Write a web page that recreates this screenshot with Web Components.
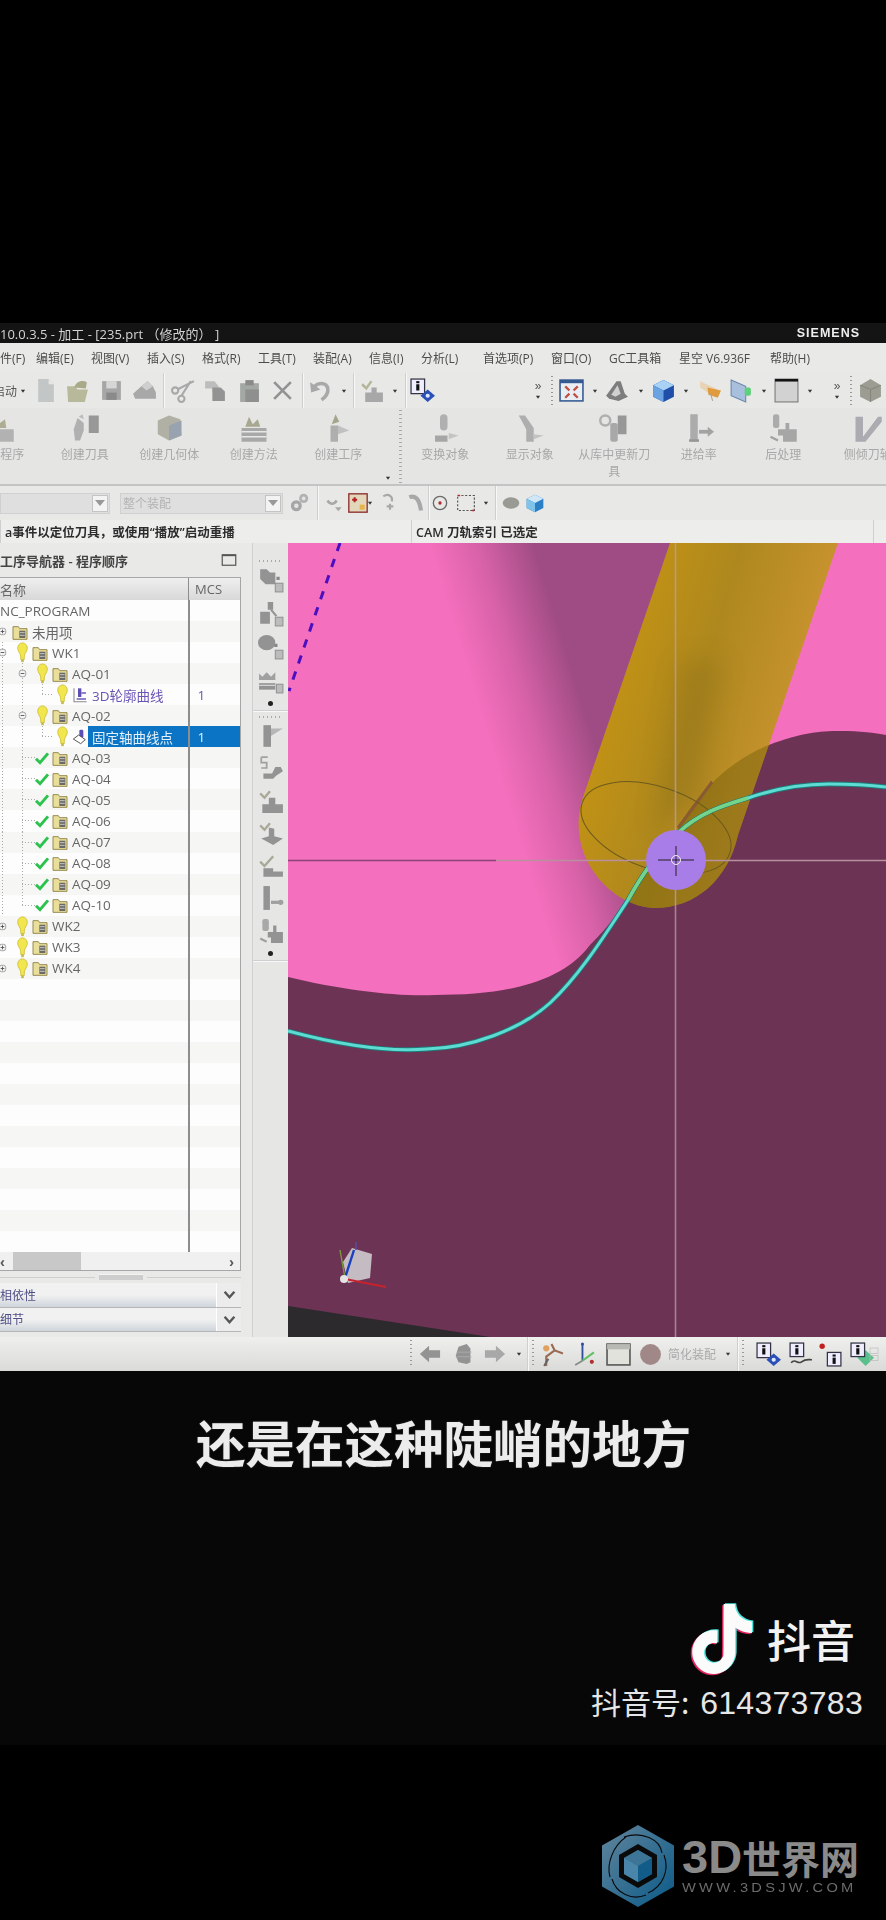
<!DOCTYPE html>
<html lang="zh">
<head>
<meta charset="utf-8">
<title>NX</title>
<style>
  html, body { margin: 0; background: #000; }
  body { width: 886px; height: 1920px; overflow: hidden; font-family: "Noto Sans CJK SC", sans-serif; }
</style>
</head>
<body>
<video-frame></video-frame>

<script>
const UI_FONT = '"Open Sans", "Noto Sans CJK SC", sans-serif';
const G = "#a8a8a8";
const D = "#939393";

const ICONS = {
  file: `<path d="M5 1h10l5 5v17H5z" fill="#c3c6c6"/><path d="M15 1v5h5z" fill="#e6e6e6"/>`,
  open: `<path d="M2 8h8l2 3h10l-3 12H3z" fill="#b7b99a"/><path d="M9 9c1-5 7-8 12-5l-1 6z" fill="#a8aa8a"/>`,
  save: `<path d="M3 3h18v18H3z" fill="#a6a6a6"/><rect x="7" y="3" width="10" height="7" fill="#d6d6d6"/><rect x="7" y="14" width="10" height="7" fill="#8a8a8a"/>`,
  print: `<path d="M1 15l8-7 6-5 5 5 3 6v6H3z" fill="${G}"/><path d="M9 8l6-5 5 5-6 4z" fill="#cfcfcf"/>`,
  cut: `<g fill="none" stroke="${G}" stroke-width="2"><circle cx="4" cy="12" r="3"/><circle cx="10" cy="20" r="3"/><path d="M6 11L22 3M10 17L19 3" /></g>`,
  copy: `<path d="M2 3h9l4 5v5h-6v-3H2z" fill="#bdbdbd"/><path d="M9 9h8l4 4v9H9z" fill="${D}"/>`,
  paste: `<path d="M3 5h18v18H3z" fill="#a4a8a4"/><rect x="8" y="2" width="8" height="5" fill="#8a8a8a"/><rect x="8" y="11" width="13" height="12" fill="#8f8f8f"/>`,
  cross: `<path d="M4 4l16 16M20 4L4 20" stroke="${D}" stroke-width="2.6" fill="none"/>`,
  undo: `<path d="M6 8c6-5 14-3 13 5-1 4-3 6-6 8" fill="none" stroke="${G}" stroke-width="3.4"/><path d="M2 4l1 10 9-3z" fill="${G}"/>`,
  gearcheck: `<path d="M2 6l4 4 5-7" fill="none" stroke="#b5b59c" stroke-width="2.4"/><path d="M11 9h5v5h6v9H5v-9h6z" fill="${G}"/>`,
  info: `<rect x="1" y="1" width="13" height="14" fill="#eef" stroke="#334" stroke-width="1.2"/><rect x="6" y="6" width="3" height="6" fill="#111"/><rect x="6" y="3" width="3" height="2" fill="#111"/><path d="M17 11l7 6-7 6-7-6z" fill="#2a50b8"/><circle cx="17" cy="17" r="2" fill="#dfe8ff"/>`,
  view: `<rect x="1" y="2" width="22" height="20" fill="#e9eef5" stroke="#355a92" stroke-width="1.5"/><rect x="1" y="2" width="22" height="3" fill="#355a92"/><path d="M6 8l4 4M18 8l-4 4M6 19l4-4M18 19l-4-4" stroke="#c05040" stroke-width="2.2"/>`,
  render: `<path d="M2 17L12 3h4l4 12 3 3-9 4-9-2z" fill="#7d7d7d"/><path d="M7 16l6-9 3 8-5 3z" fill="#d0d0d0"/>`,
  cube: `<path d="M12 2l10 5v11l-10 5-10-5V7z" fill="#1f4fa8"/><path d="M2 7l10-5 10 5-10 5z" fill="#a9d2f5"/><path d="M2 7l10 5v11L2 18z" fill="#6aa3e2"/>`,
  orange: `<path d="M3 3l17 8-5 6-12-8z" fill="#e8d3b4"/><path d="M10 9l13 3-3 7-9-3z" fill="#e09b3e"/><path d="M13 15l2 7" stroke="#b0a090"/>`,
  glass: `<path d="M3 2l14 6v15L3 17z" fill="#a8c0de" stroke="#6a84a8"/><rect x="16" y="9" width="6" height="8" rx="2" fill="#5fd07a"/>`,
  black: `<rect x="1" y="1" width="22" height="22" fill="#d2d2d2" stroke="#777"/><rect x="1" y="1" width="22" height="2.4" fill="#111"/>`,
  hexcube: `<path d="M12 1l10 6v11l-10 5-10-5V7z" fill="#9c9c92"/><path d="M12 11V23M2 7l10 4 10-4" stroke="#86867c" fill="none"/>`,
  rTool: `<path d="M6 4l5 4v6l-3 8H4l-1-9z" fill="#b0b0b0"/><rect x="15" y="2" width="8" height="14" fill="#989898"/><path d="M7 3l3-2 1 4z" fill="#bcbcbc"/>`,
  rGeom: `<path d="M3 6l9-4 9 3 1 13-10 4-9-5z" fill="#b0b0a4"/><path d="M12 10l10-4v12l-10 4z" fill="#99a3af"/>`,
  rMethod: `<path d="M2 12h20v11H2z" fill="#a8a8a8"/><path d="M2 15h20M2 19h20" stroke="#e8e8e8" stroke-width="1.3"/><path d="M5 11l3-8 3 6 4-4 2 6z" fill="#a8a892"/>`,
  rOp: `<path d="M6 10h6v13H6z" fill="#aeaeae"/><path d="M12 10l9 4-9 3z" fill="#c0c0c0"/><path d="M7 9l3-8 3 6z" fill="#a5a58f"/>`,
  rProg: `<path d="M1 13h22v10H1z" fill="#b2b2b2"/><path d="M6 12l3-8 3 4 4-3 1 7z" fill="#adad93"/>`,
  rTrans: `<rect x="8" y="1" width="6" height="13" rx="3" fill="#b0b0b0"/><path d="M4 18h10v5H4z" fill="#a6a6a6"/><path d="M15 16l8 2-8 3z" fill="#c4c4c4"/>`,
  rShow: `<path d="M3 2l5 0 7 10v11H9V13z" fill="#aeaeae"/><path d="M15 17l8 1-8 3z" fill="#c2c2c2"/>`,
  rLib: `<circle cx="5" cy="6" r="4" fill="none" stroke="#b0b0b0" stroke-width="2"/><rect x="9" y="8" width="6" height="15" rx="2" fill="#a8a8a8"/><path d="M15 2h7v15h-7z" fill="#989898"/>`,
  rFeed: `<rect x="5" y="1" width="6" height="22" fill="#ababab"/><path d="M4 21h8v2H4z" fill="#989898"/><path d="M12 15h8" stroke="#a3a3a3" stroke-width="3"/><path d="M19 11l5 4-5 4z" fill="#a3a3a3"/>`,
  rPost: `<rect x="4" y="1" width="5" height="11" rx="2" fill="#ababab"/><path d="M8 13h6v-5h3v5h6v10H12v-5H8z" fill="#a6a6a6"/><path d="M2 19l6 3" stroke="#a2a2a2" stroke-width="2"/>`,
  rTilt: `<path d="M2 3h6v16l12-16h3v4L10 23H2z" fill="#ababb1"/>`,
  gears: `<circle cx="8" cy="15" r="6" fill="#a6a6a6"/><circle cx="16" cy="7" r="5" fill="#b2b2b2"/><circle cx="8" cy="15" r="2.4" fill="#e4e4e4"/><circle cx="16" cy="7" r="2" fill="#e4e4e4"/>`,
  link: `<path d="M3 9c3 5 8 5 11 0" fill="none" stroke="${G}" stroke-width="3"/><path d="M12 17l8 0-4 5z" fill="${G}"/>`,
  redbox: `<rect x="1" y="1" width="22" height="22" fill="#e3d7bb" stroke="#8c2c2c" stroke-width="1.6"/><path d="M5 8h6M8 5v6" stroke="#b02020" stroke-width="2.4"/><rect x="14" y="14" width="6" height="6" fill="#e4b44a"/>`,
  twist: `<path d="M4 4c6-4 12 0 10 6M12 20v-7M8 16h8" fill="none" stroke="${G}" stroke-width="2.6"/>`,
  snake: `<path d="M4 5c8-3 12 3 14 16" fill="none" stroke="${G}" stroke-width="5"/>`,
  target: `<circle cx="12" cy="12" r="8" fill="none" stroke="#6a6a6a" stroke-width="1.6"/><circle cx="12" cy="12" r="2" fill="#b02a2a"/>`,
  dotted: `<rect x="2" y="3" width="20" height="18" fill="none" stroke="#555" stroke-width="1.4" stroke-dasharray="2.5 2"/><path d="M2 3h3M22 21h-3" stroke="#b03030" stroke-width="2"/>`,
  blob: `<ellipse cx="12" cy="12" rx="10" ry="7" fill="#9a9a94"/>`,
  bluecube: `<path d="M12 2l10 5v11l-10 5-10-5V7z" fill="#2b7fc4"/><path d="M2 7l10-5 10 5-10 5z" fill="#cfe7f7"/><path d="M2 7l10 5v11L2 18z" fill="#7fc2ea"/>`,
  left: `<path d="M1 12l10-9v5h12v8H11v5z" fill="${D}"/>`,
  right: `<path d="M23 12L13 3v5H1v8h12v5z" fill="${G}"/>`,
  stack: `<path d="M6 4l9-3 4 5v15l-4 2-9-2-3-7z" fill="${D}"/><path d="M4 10h16M4 15h16" stroke="#aaa"/>`,
  triad: `<path d="M6 23V14l8-6 8 3M14 8l-3-6" fill="none" stroke="#9a6a50" stroke-width="2"/><circle cx="6" cy="6" r="3" fill="#e0a060"/><path d="M4 23l4-7" stroke="#666" stroke-width="2"/>`,
  triad2: `<path d="M11 2v16" stroke="#3050a0" stroke-width="1.8"/><path d="M11 18l11-8" stroke="#60c060" stroke-width="2"/><path d="M11 18l-7 4" stroke="#888" stroke-width="1.6"/><circle cx="20" cy="19" r="2" fill="#b03030"/><circle cx="11" cy="2" r="1.5" fill="#3050a0"/>`,
  win: `<rect x="1" y="2" width="22" height="20" fill="#e2e2dc" stroke="#5c5c5c" stroke-width="1.6"/><rect x="1" y="2" width="22" height="5" fill="#b8b8b4"/>`,
  disc: `<circle cx="12" cy="12" r="10" fill="#a08888"/>`,
  iwave: `<rect x="2" y="1" width="13" height="13" fill="#eef" stroke="#334" stroke-width="1.2"/><rect x="7" y="6" width="3" height="6" fill="#111"/><rect x="7" y="3" width="3" height="2" fill="#111"/><path d="M3 20c4-5 6 2 10-1s6-2 10-2" fill="none" stroke="#444" stroke-width="1.6"/>`,
  idot: `<circle cx="4" cy="4" r="2.6" fill="#c02020"/><rect x="9" y="10" width="13" height="13" fill="#eef" stroke="#334" stroke-width="1.2"/><rect x="14" y="15" width="3" height="6" fill="#111"/><rect x="14" y="12" width="3" height="2" fill="#111"/>`,
  igreen: `<path d="M15 8l8 7-8 8-8-8z" fill="#58c08a"/><rect x="1" y="1" width="13" height="13" fill="#eef" stroke="#334" stroke-width="1.2"/><rect x="6" y="6" width="3" height="6" fill="#111"/><rect x="6" y="3" width="3" height="2" fill="#111"/>`,
  boxes: `<rect x="3" y="3" width="12" height="8" fill="none" stroke="#bbb"/><rect x="3" y="14" width="12" height="8" fill="none" stroke="#bbb"/>`,
  v1: `<path d="M2 2h6l3 3h5v11H7l-5-5z" fill="${D}"/><rect x="17" y="9" width="3" height="3" fill="#888"/><rect x="16" y="15" width="7" height="8" fill="#bcbcbc" stroke="#949494"/>`,
  v2: `<path d="M9 1h5v7h-5zM2 10h9v11H2z" fill="${D}"/><path d="M12 8l5 6" stroke="#949494" stroke-width="2"/><rect x="16" y="15" width="7" height="8" fill="#bcbcbc" stroke="#949494"/>`,
  v3: `<ellipse cx="8" cy="8" rx="8" ry="7" fill="${D}"/><rect x="15" y="9" width="3" height="3" fill="#888"/><rect x="16" y="15" width="7" height="8" fill="#bcbcbc" stroke="#949494"/>`,
  v4: `<path d="M1 5l3 3 4-4 4 4 4-4v7H1z" fill="#a0a0a0"/><path d="M1 14h15v6H1z" fill="${D}"/><path d="M1 16h15" stroke="#ddd"/><rect x="17" y="15" width="6" height="8" fill="#bcbcbc" stroke="#949494"/>`,
  v5: `<path d="M5 2h7v20H5z" fill="${D}"/><path d="M12 5h11l-11 7z" fill="#b6b6b6"/>`,
  v6: `<path d="M3 2h6M3 2v5h5v5H3" fill="none" stroke="#a0a0a0" stroke-width="1.6"/><path d="M5 17h8l3-6h5l2 4-6 4-3 3H5z" fill="${D}"/>`,
  v7: `<path d="M2 5l4 4 5-6" fill="none" stroke="#a9a99a" stroke-width="2.2"/><path d="M10 9h6v6h7v8H4v-8h6z" fill="${D}"/>`,
  v8: `<path d="M2 5l4 4 5-6" fill="none" stroke="#a9a99a" stroke-width="2.2"/><path d="M10 7l5 1v7l8 2-9 6-11-6 7-2z" fill="${D}"/>`,
  v9: `<path d="M2 8l4 4 8-9" fill="none" stroke="#a9a99a" stroke-width="2.2"/><path d="M5 14h9v3h9v5H5z" fill="${D}"/>`,
  v10: `<rect x="5" y="1" width="6" height="22" fill="${D}"/><path d="M12 16h9" stroke="#a0a0a0" stroke-width="3"/><circle cx="21" cy="16" r="2.4" fill="#a0a0a0"/>`,
  v11: `<rect x="4" y="1" width="6" height="11" rx="2" fill="#a8a8a8"/><path d="M9 13h5V7h3v6h6v10H12v-5H9z" fill="${D}"/><path d="M2 19l6 3" stroke="#a0a0a0" stroke-width="2"/>`,
  bulb: `<path d="M12 1c3 0 5.5 2.6 5.5 6 0 4-3.5 6-3.5 10v3h-4v-3c0-4-3.5-6-3.5-10 0-3.4 2.500-6 5.500-6z" fill="#f2e64e" stroke="#cfc038" stroke-width="1"/><rect x="10.500" y="20" width="3" height="3" fill="#c4b850"/>`,
  check: `<path d="M3 13l6 6L21 5" fill="none" stroke="#2cc24e" stroke-width="4.4"/>`,
  folder: `<path d="M1.500 4h8l2 3h11v16h-21z" fill="#eadf9a" stroke="#8e8344" stroke-width="1.4"/><rect x="11" y="10" width="9" height="11" fill="#6a6a66"/><path d="M12 13h7M12 17h7" stroke="#ddd" stroke-width="1.2"/>`,
  op1: `<path d="M3 2v20h19" fill="none" stroke="#8a8a8a" stroke-width="1.6"/><rect x="9" y="2" width="5" height="13" fill="#5d4fb0"/><path d="M14 9h7M7 18h14" stroke="#6a5ab8" stroke-width="2"/>`,
  op2: `<rect x="11" y="1" width="6" height="12" rx="2" fill="#5b4fb5"/><path d="M2 15l8-6 10 7-7 6z" fill="#fff" stroke="#555" stroke-width="1.5"/>`,
  plus: `<rect x="5" y="5" width="14" height="14" rx="5" fill="#f4f4f4" stroke="#999" stroke-width="2"/><path d="M8 12h8M12 8v8" stroke="#555" stroke-width="2"/>`,
  minus: `<rect x="5" y="5" width="14" height="14" rx="5" fill="#f4f4f4" stroke="#999" stroke-width="2"/><path d="M8 12h8" stroke="#555" stroke-width="2"/>`,
  caret: `<path d="M7 9h10l-5 7z" fill="#333"/>`,
  chevron: `<path d="M3 7l9 10 9-10" fill="none" stroke="#555" stroke-width="4.4"/>`,
  restore: `<rect x="3" y="5" width="18" height="14" fill="none" stroke="#555" stroke-width="1.6"/><path d="M3 6h18" stroke="#555" stroke-width="1.8"/>`,
};

class NxIcon extends HTMLElement {
  connectedCallback() {
    const size = this.getAttribute("size") || 24;
    const name = this.getAttribute("name");
    this.attachShadow({ mode: "open" }).innerHTML = `
      <style>
        :host { display: inline-flex; flex: none; width: ${size}px; height: ${size}px; }
        svg { width: 100%; height: 100%; display: block; }
      </style>
      <svg viewBox="0 0 24 24">${ICONS[name] || ""}</svg>`;
  }
}

// [type, centre x, size] -> flex children, spaced by margins from the previous item
function toolStrip(items, start) {
  let right = start || 0;
  return items.map(([type, x, size]) => {
    let w, html;
    if (type === "sep") {
      w = 1;
      html = `<i class="sep"></i>`;
    } else if (type === "dots") {
      w = 2;
      html = `<i class="dots"></i>`;
    } else if (type === "more") {
      w = 10;
      html = `<i class="more">»<nx-icon name="caret" size="10"></nx-icon></i>`;
    } else {
      w = size || (type === "caret" ? 10 : 25);
      html = `<nx-icon name="${type}" size="${w}"></nx-icon>`;
    }
    const ml = x - w / 2 - right;
    right = x + w / 2;
    return `<span class="slot" style="margin-left:${ml.toFixed(1)}px">${html}</span>`;
  }).join("");
}

const STRIP_CSS = `
  .slot { display: inline-flex; align-items: center; flex: none; height: 100%; }
  .sep { display: block; width: 1px; height: 100%; background: #cfcfcf; box-shadow: 1px 0 #f7f7f7; }
  .dots { display: block; width: 2px; height: 84%; background: repeating-linear-gradient(#999 0 1.5px, transparent 1.5px 4px); }
  .more { display: flex; flex-direction: column; align-items: center; width: 10px; font: normal 12px/12px "Liberation Sans", sans-serif; color: #555; }
`;

class NxTitlebar extends HTMLElement {
  connectedCallback() {
    this.attachShadow({ mode: "open" }).innerHTML = `
      <style>
        :host { display: flex; align-items: center; justify-content: space-between; height: 20px; background: #141414; padding-right: 26px; color: #d4d4d4; font: 13px ${UI_FONT}; overflow: hidden; }
        b { font: bold 12.5px "Liberation Sans", sans-serif; letter-spacing: 1px; color: #eee; }
      </style>
      <span>10.0.3.5 - 加工 - [235.prt （修改的） ]</span><b>SIEMENS</b>`;
  }
}

class NxMenubar extends HTMLElement {
  connectedCallback() {
    const items = [["件(F)", 0], ["编辑(E)", 36], ["视图(V)", 91], ["插入(S)", 147], ["格式(R)", 202], ["工具(T)", 258], ["装配(A)", 313], ["信息(I)", 369], ["分析(L)", 421], ["首选项(P)", 483], ["窗口(O)", 551], ["GC工具箱", 609], ["星空 V6.936F", 679], ["帮助(H)", 770]];
    this.attachShadow({ mode: "open" }).innerHTML = `
      <style>
        :host { display: grid; grid-template-columns: repeat(886, 1px); align-items: center; height: 30px; background: #e9e9e7; color: #4c4c4c; font: 12px ${UI_FONT}; white-space: nowrap; }
      </style>
      ${items.map(([t, x]) => `<span style="grid-row:1;grid-column-start:${x + 1}">${t}</span>`).join("")}`;
  }
}

class NxToolbar extends HTMLElement {
  connectedCallback() {
    const h = this.getAttribute("height") || 35;
    const items = JSON.parse(this.getAttribute("items") || "[]");
    const bg = this.getAttribute("bg") || "#e8e8e6";
    this.attachShadow({ mode: "open" }).innerHTML = `
      <style>
        :host { display: flex; align-items: center; height: ${h}px; background: ${bg}; overflow: hidden; }
        ${STRIP_CSS}
        ::slotted(*) { flex: none; }
      </style>
      <slot></slot>${toolStrip(items, +this.getAttribute("start") || 0)}`;
  }
}

class NxRibbonItem extends HTMLElement {
  connectedCallback() {
    this.attachShadow({ mode: "open" }).innerHTML = `
      <style>
        :host { display: flex; flex: none; flex-direction: column; align-items: center; width: 84.5px; padding-top: 5px; color: #a8a8a8; font: 12px/17px ${UI_FONT}; text-align: center; }
        nx-icon { margin-bottom: 3px; }
        span { width: 76px; }
      </style>
      <nx-icon name="${this.getAttribute("icon")}" size="30"></nx-icon><span><slot></slot></span>`;
  }
}

class NxRibbon extends HTMLElement {
  connectedCallback() {
    this.attachShadow({ mode: "open" }).innerHTML = `
      <style>
        :host { display: flex; height: 78px; background: #e5e5e3; box-shadow: inset 0 -2px #c4c4c4; overflow: hidden; }
        .group { display: flex; flex: none; }
        .first { margin-left: -42px; width: 445px; }
        .caret { align-self: flex-end; margin: 0 0 3px 2px; }
        .rule { width: 3px; margin: 2px 8px 3px 6px; background: repeating-linear-gradient(#aaa 0 1.5px, transparent 1.5px 4px); flex: none; }
      </style>
      <div class="group first"><slot name="a"></slot><nx-icon class="caret" name="caret" size="10"></nx-icon><i class="rule"></i></div>
      <div class="group"><slot name="b"></slot></div>`;
  }
}

class NxDropdown extends HTMLElement {
  connectedCallback() {
    this.attachShadow({ mode: "open" }).innerHTML = `
      <style>
        :host { display: flex; flex: none; align-items: center; height: 21px; box-sizing: border-box; background: #dfdfdf; color: #b4b4b4; font: 12px ${UI_FONT}; padding-left: 3px; box-shadow: inset 0 0 0 1px #d0d0d0; }
        span { flex: 1; }
        i { display: flex; align-items: center; justify-content: center; width: 16px; height: 17px; margin-right: 2px; background: #f3f3f3; border: 1px solid #c4c4c4; box-sizing: border-box; }
        i::after { content: ""; border: 5px solid transparent; border-top: 6px solid #999; border-bottom: 0; }
      </style>
      <span><slot></slot></span><i></i>`;
  }
}

class NxCuebar extends HTMLElement {
  connectedCallback() {
    this.attachShadow({ mode: "open" }).innerHTML = `
      <style>
        :host { display: grid; grid-template-columns: 411px 462px 1fr; align-items: center; height: 23px; background: #ededeb; color: #2c2c2c; font: 600 12.5px ${UI_FONT}; white-space: nowrap; overflow: hidden; }
        span { padding-left: 4px; border-left: 1px solid #cfcfcf; height: 100%; display: flex; align-items: center; }
        span:first-child { padding: 0; border: 0; }
      </style>
      <span>a事件以定位刀具，或使用“播放”启动重播</span><span>CAM 刀轨索引 已选定</span><span></span>`;
  }
}

class NxTreeRow extends HTMLElement {
  connectedCallback() {
    const a = n => this.getAttribute(n);
    const level = +(a("level") || 0);
    const exp = a("exp");
    const mark = a("mark");
    const icon = a("icon");
    const sel = this.hasAttribute("selected");
    const guides = (a("guides") || "").split(",").filter(Boolean);
    const stub = a("stub");
    const bgs = guides.map(g => {
      const [x, to] = g.split(":");
      return `repeating-linear-gradient(#aaa 0 1px, transparent 1px 3px) ${x}px 0 / 1px ${to || 100}% no-repeat`;
    });
    if (stub) {
      const [x, w] = stub.split(":");
      bgs.push(`repeating-linear-gradient(90deg, #aaa 0 1px, transparent 1px 3px) ${x}px 50% / ${w}px 1px no-repeat`);
    }
    this.attachShadow({ mode: "open" }).innerHTML = `
      <style>
        :host { display: grid; grid-template-columns: 188px 52px; height: 21.05px; background: ${a("alt") !== null ? "#f6f6f5" : "#fdfdfd"}; color: ${a("color") || "#666"}; font: 13.5px ${UI_FONT}; white-space: nowrap; overflow: hidden; }
        .name { display: flex; align-items: center; background: ${bgs.join(",") || "none"}; }
        .in { flex: none; margin-left: ${level * 20 - 8}px; }
        .bar { flex: none; width: 1.5px; background: #8d8d8d; }
        .box { display: flex; flex: none; align-items: center; justify-content: center; width: 20px; height: 100%; }
        .ic { flex: none; width: 16px; display: flex; }
        .t { flex: 1; display: flex; align-items: center; height: 100%; padding-left: 4px; ${sel ? "background: #0b74c4; color: #e6f2fb;" : ""} }
        .mcs { padding-left: 8px; display: flex; align-items: center; flex: 1; ${sel ? "background: #0b74c4; color: #e6f2fb;" : ""} }
      </style>
      <div class="name">
        <i class="in"></i>
        ${exp ? `<span class="box"><nx-icon name="${exp}" size="11"></nx-icon></span>` : (mark || icon) ? `<span class="box"></span>` : ""}
        ${mark ? `<span class="box"><nx-icon name="${mark}" size="${mark === "bulb" ? 21 : 16}"></nx-icon></span>` : ""}
        ${icon ? `<span class="ic"><nx-icon name="${icon}" size="16"></nx-icon></span>` : ""}
        <span class="t"><slot></slot></span>
      </div>
      <div style="display:flex"><i class="bar"></i><span class="mcs">${a("mcs") || ""}</span></div>`;
  }
}

class NxNavigator extends HTMLElement {
  connectedCallback() {
    const aq = ["03", "04", "05", "06", "07", "08", "09", "10"];
    const rows = [
      `label|NC_PROGRAM|level=.2`,
      `未用项|exp=plus|level=0|icon=folder`,
      `WK1|exp=minus|level=0|mark=bulb|icon=folder|guides=2`,
      `AQ-01|exp=minus|level=1|mark=bulb|icon=folder|guides=2,22`,
      `3D轮廓曲线|level=2|mark=bulb|icon=op1|color=#6a55b4|mcs=1|guides=2,22,42:50|stub=42:12`,
      `AQ-02|exp=minus|level=1|mark=bulb|icon=folder|guides=2,22`,
      `固定轴曲线点|level=2|mark=bulb|icon=op2|selected|mcs=1|guides=2,22,42:50|stub=42:12`,
      ...aq.map((n, i) => `AQ-${n}|level=1|mark=check|icon=folder|guides=2,22${i === 7 ? ":50" : ""}|stub=22:14`),
      `WK2|exp=plus|level=0|mark=bulb|icon=folder`,
      `WK3|exp=plus|level=0|mark=bulb|icon=folder`,
      `WK4|exp=plus|level=0|mark=bulb|icon=folder`,
    ];
    const html = [];
    rows.forEach((r, i) => {
      const parts = r.split("|");
      let text = parts[0], start = 1;
      if (text === "label") { text = parts[1]; start = 2; }
      const attrs = parts.slice(start).map(p => {
        const [k, v] = p.split("=");
        return v === undefined ? k : `${k}="${v}"`;
      }).join(" ");
      html.push(`<nx-tree-row ${attrs} ${i % 2 ? "alt" : ""}>${text}</nx-tree-row>`);
    });
    for (let i = rows.length; i < 31; i++) html.push(`<nx-tree-row ${i % 2 ? "alt" : ""}></nx-tree-row>`);
    this.attachShadow({ mode: "open" }).innerHTML = `
      <style>
        :host { display: flex; flex: none; flex-direction: column; width: 252px; background: #e9e9e7; box-sizing: border-box; font: 13px ${UI_FONT}; color: #555; }
        header { display: flex; align-items: center; justify-content: space-between; height: 34px; padding-right: 14px; font-weight: 600; color: #444; }
        .table { display: flex; flex-direction: column; flex: 1; min-height: 0; width: 241px; border: solid #a6a6a6; border-width: 1px 1px 1px 0; box-sizing: border-box; background: #fff; }
        .head { display: grid; grid-template-columns: 188px 52px; flex: none; height: 22px; background: linear-gradient(#efefef, #d8d8d8); color: #666; align-items: center; }
        .head span + span { border-left: 1.5px solid #8d8d8d; height: 100%; display: flex; align-items: center; padding-left: 6px; }
        .rows { flex: 1; min-height: 0; overflow: hidden; }
        .scroll { display: flex; flex: none; align-items: center; height: 18px; background: #f0f0f0; color: #555; font: bold 15px "Liberation Sans", sans-serif; }
        .scroll i { display: block; width: 68px; height: 100%; margin-left: 8px; background: #c8c8c8; }
        .scroll b { margin-left: auto; margin-right: 6px; }
        .splitter { display: flex; flex: none; align-items: center; gap: 4px; height: 12px; width: 241px; }
        .splitter i { flex: 1; height: 1px; background: #cfcfcf; }
        .splitter u { width: 44px; height: 5px; background: #cdcdcd; border-top: 1px solid #f4f4f4; }
        .acc { display: flex; flex: none; height: 24.5px; width: 241px; align-items: center; box-sizing: border-box; border-bottom: 1px solid #b6b6b6; background: linear-gradient(#f1f1f1 50%, #cfd5dc); color: #4f4f86; font-size: 12px; }
        .acc span { flex: 1; }
        .acc i { display: flex; align-items: center; justify-content: center; width: 24px; height: 100%; background: #ececec; border-left: 1px solid #fff; }
        footer { flex: none; height: 5px; }
      </style>
      <header><span>工序导航器 - 程序顺序</span><nx-icon name="restore" size="18"></nx-icon></header>
      <div class="table">
        <div class="head"><span>名称</span><span>MCS</span></div>
        <div class="rows">${html.join("")}</div>
        <div class="scroll"><span>‹</span><i></i><b>›</b></div>
      </div>
      <div class="splitter"><i></i><u></u><i></i></div>
      <div class="acc"><span>相依性</span><i><nx-icon name="chevron" size="13"></nx-icon></i></div>
      <div class="acc"><span>细节</span><i><nx-icon name="chevron" size="13"></nx-icon></i></div>
      <footer></footer>`;
  }
}

class NxSideTools extends HTMLElement {
  connectedCallback() {
    const group = names => names.map(n => `<nx-icon name="${n}" size="26"></nx-icon>`).join("");
    this.attachShadow({ mode: "open" }).innerHTML = `
      <style>
        :host { display: flex; flex: none; flex-direction: column; align-items: center; width: 36px; background: #e6e6e4; box-sizing: border-box; border-left: 1px solid #d0d0d0; }
        .dots { width: 24px; height: 2px; margin: 17px 0 5px; background: repeating-linear-gradient(90deg, #aaa 0 1.5px, transparent 1.5px 4px); flex: none; }
        .g { display: flex; flex-direction: column; align-items: center; gap: 7.5px; }
        .g2 { gap: 6.5px; }
        .cap { width: 5px; height: 5px; background: #222; border-radius: 50%; margin-top: 7px; flex: none; }
        hr { width: 100%; margin: 4px 0 0; border: 0; border-top: 1px solid #cfcfcf; border-bottom: 1px solid #f8f8f8; }
        .dots.b { margin-top: 4px; }
      </style>
      <i class="dots"></i>
      <div class="g">${group(["v1", "v2", "v3", "v4"])}</div>
      <i class="cap"></i><hr>
      <i class="dots b"></i>
      <div class="g g2">${group(["v5", "v6", "v7", "v8", "v9", "v10", "v11"])}</div>
      <i class="cap"></i><hr>`;
  }
}

class NxViewport extends HTMLElement {
  connectedCallback() {
    const maroon = "M288 977C340 990 400 997 435 995C500 995 560 985 590 945C610 925 620 910 628 900L678 829C695 795 730 760 769 745C800 733 820 731 840 731C860 731 875 733 886 735L886 1337L288 1337Z";
    const tool = "M670 543L582 800C565 860 615 908 655 908C695 908 728 880 738 835L838 543Z";
    const curve = "M288 1031C340 1045 390 1052 427 1049C470 1048 520 1030 550 1003C580 975 605 935 628 900C640 878 655 855 678 833C700 812 725 805 748 798C780 787 805 784 829 784C850 784 870 785 886 787";
    this.attachShadow({ mode: "open" }).innerHTML = `
      <style>
        :host { display: block; flex: 1; min-width: 0; background: #f46fbd; overflow: hidden; }
        svg { display: block; width: 598px; height: 794px; }
      </style>
      <svg viewBox="288 543 598 794">
        <defs>
          <linearGradient id="band" gradientUnits="userSpaceOnUse" x1="440" y1="578" x2="535" y2="549">
            <stop offset="0" stop-color="#f46fbd"/><stop offset=".45" stop-color="#d862a8"/><stop offset="1" stop-color="#a04c84"/>
          </linearGradient>
          <linearGradient id="tool" gradientUnits="userSpaceOnUse" x1="585" y1="760" x2="760" y2="810">
            <stop offset="0" stop-color="#c29214"/><stop offset=".5" stop-color="#ae881e"/><stop offset="1" stop-color="#c6922e"/>
          </linearGradient>
          <clipPath id="toolClip"><path d="${tool}"/></clipPath>
          <filter id="soft" x="-40%" y="-40%" width="180%" height="180%"><feGaussianBlur stdDeviation="12"/></filter>
        </defs>
        <rect x="288" y="543" width="598" height="794" fill="#f46fbd"/>
        <path d="M288 543H700V1000H288Z" fill="url(#band)"/>
        <path d="${maroon}" fill="#6c3354"/>
        <path d="M771 543C790 550 812 550 829 543" fill="#111"/>
        <path d="${tool}" fill="url(#tool)"/>
        <g clip-path="url(#toolClip)">
          <path d="M680 660L724 660L700 800L655 830Z" fill="#7f6612" opacity=".3" filter="url(#soft)"/>
          <path d="${maroon}" fill="#6c5a08" opacity=".42"/>
          <path d="M678 828L712 782L690 812Z" fill="#8a5a30" stroke="#8a5a30" stroke-width="3"/>
        </g>
        <ellipse cx="656" cy="828" rx="78" ry="41" transform="rotate(19 656 828)" fill="none" stroke="#6c5a1e" stroke-width="1"/>
        <path d="M288 860.5H496" stroke="#8a4478" stroke-width="1.4"/>
        <path d="M496 860.5H886" stroke="#b8909e" stroke-width="1.4"/>
        <path d="M675.5 543V1337" stroke="#b8a2a0" stroke-opacity=".75" stroke-width="1.6"/>
        <path d="${curve}" fill="none" stroke="#1c7d78" stroke-width="4.8"/>
        <path d="${curve}" fill="none" stroke="#5edcd3" stroke-width="3"/>
        <path d="M628 900C640 878 655 855 678 833C700 812 725 805 748 798" fill="none" stroke="#74d48a" stroke-width="3.6"/>
        <ellipse cx="676" cy="860" rx="30" ry="30" fill="#a97de8"/>
        <path d="M658 860H694M676 846V876" stroke="#222" stroke-width="1"/>
        <circle cx="676" cy="860" r="4.5" fill="none" stroke="#eee" stroke-width="1"/>
        <path d="M340 543L289 691" stroke="#4a10c0" stroke-width="3" stroke-dasharray="8.5 8.5" fill="none"/>
        <path d="M288 1306L490 1337H288Z" fill="#2c2a2d"/>
        <path d="M343 1262L352 1248L372 1254L370 1278L348 1283Z" fill="#c4bcc2"/>
        <path d="M354 1250L345 1278" stroke="#1a3fc0" stroke-width="2.4"/>
        <path d="M340 1250L345 1278" stroke="#7a9a3c" stroke-width="1.4"/>
        <path d="M345 1279L386 1287" stroke="#c8222c" stroke-width="1.8"/>
        <path d="M356 1242V1250" stroke="#5a4a9a" stroke-width="1.6"/>
        <circle cx="344" cy="1279" r="4" fill="#e4e4e4"/>
      </svg>`;
  }
}

class NxWindow extends HTMLElement {
  connectedCallback() {
    const tb1 = [["caret", 23], ["file", 45], ["open", 77], ["save", 111], ["print", 144], ["sep", 163], ["cut", 183], ["copy", 215], ["paste", 249], ["cross", 282], ["sep", 302], ["undo", 320], ["caret", 344], ["sep", 353], ["gearcheck", 372], ["caret", 395], ["sep", 405], ["info", 422], ["more", 538], ["dots", 552], ["view", 571], ["caret", 595], ["render", 616], ["caret", 641], ["cube", 663], ["caret", 686], ["orange", 709], ["glass", 740], ["caret", 764], ["black", 786], ["caret", 810], ["more", 837], ["dots", 851], ["hexcube", 870]];
    const tb3 = [["gears", 300, 22], ["sep", 317], ["link", 335, 20], ["redbox", 358, 20], ["caret", 370], ["twist", 390, 20], ["snake", 416, 20], ["sep", 428], ["target", 440, 20], ["dotted", 466, 20], ["caret", 486], ["sep", 495], ["blob", 511, 20], ["bluecube", 535, 20]];
    const tb4 = [["dots", 411], ["left", 430, 22], ["stack", 464, 22], ["right", 495, 22], ["caret", 519], ["sep", 527], ["dots", 533], ["triad", 552], ["triad2", 583], ["win", 618], ["disc", 650], ["caret", 728], ["sep", 737], ["dots", 743], ["info", 768], ["iwave", 800], ["idot", 830], ["igreen", 862], ["boxes", 876, 16]];
    const q = a => JSON.stringify(a).replace(/"/g, "&quot;");
    this.attachShadow({ mode: "open" }).innerHTML = `
      <style>
        :host { display: flex; flex-direction: column; height: 1048px; filter: blur(.55px); overflow: hidden; position: relative; font: 12px ${UI_FONT}; }
        .main { display: flex; height: 794px; }
        .lead { font: 12px ${UI_FONT}; color: #555; width: 17px; margin-left: -7px; margin-right: -10px; white-space: nowrap; }
        .drop1 { width: 110px; }
        .drop2 { width: 163px; margin-left: 10px; }
        .label { position: absolute; left: 668px; bottom: 8px; font: 12px ${UI_FONT}; color: #aaa; white-space: nowrap; }
      </style>
      <nx-titlebar></nx-titlebar>
      <nx-menubar></nx-menubar>
      <nx-toolbar items="${q(tb1)}"><span class="lead">启动</span></nx-toolbar>
      <nx-ribbon>
        <nx-ribbon-item slot="a" icon="rProg">创建程序</nx-ribbon-item>
        <nx-ribbon-item slot="a" icon="rTool">创建刀具</nx-ribbon-item>
        <nx-ribbon-item slot="a" icon="rGeom">创建几何体</nx-ribbon-item>
        <nx-ribbon-item slot="a" icon="rMethod">创建方法</nx-ribbon-item>
        <nx-ribbon-item slot="a" icon="rOp">创建工序</nx-ribbon-item>
        <nx-ribbon-item slot="b" icon="rTrans">变换对象</nx-ribbon-item>
        <nx-ribbon-item slot="b" icon="rShow">显示对象</nx-ribbon-item>
        <nx-ribbon-item slot="b" icon="rLib">从库中更新刀具</nx-ribbon-item>
        <nx-ribbon-item slot="b" icon="rFeed">进给率</nx-ribbon-item>
        <nx-ribbon-item slot="b" icon="rPost">后处理</nx-ribbon-item>
        <nx-ribbon-item slot="b" icon="rTilt">侧倾刀轴</nx-ribbon-item>
      </nx-ribbon>
      <nx-toolbar height="34" start="283" items="${q(tb3)}">
        <nx-dropdown class="drop1"></nx-dropdown>
        <nx-dropdown class="drop2">整个装配</nx-dropdown>
      </nx-toolbar>
      <nx-cuebar></nx-cuebar>
      <div class="main">
        <nx-navigator></nx-navigator>
        <nx-side-tools></nx-side-tools>
        <nx-viewport></nx-viewport>
      </div>
      <nx-toolbar height="34" bg="linear-gradient(#efefed,#dadad8)" items="${q(tb4)}"></nx-toolbar>
      <span class="label">简化装配</span>`;
  }
}

class DouyinMark extends HTMLElement {
  connectedCallback() {
    const note = "M12.525.02c1.31-.02 2.61-.01 3.91-.02.08 1.53.63 3.09 1.75 4.17 1.12 1.11 2.7 1.62 4.24 1.79v4.03c-1.44-.05-2.89-.35-4.2-.97-.57-.26-1.1-.59-1.62-.93-.01 2.92.01 5.84-.02 8.75-.08 1.4-.54 2.79-1.35 3.94-1.31 1.92-3.58 3.17-5.91 3.21-1.43.08-2.86-.31-4.08-1.03-2.02-1.19-3.44-3.37-3.65-5.71-.02-.5-.03-1-.01-1.49.18-1.9 1.12-3.72 2.58-4.96 1.66-1.44 3.98-2.13 6.15-1.72.02 1.48-.04 2.96-.04 4.44-.99-.32-2.15-.23-3.02.37-.63.41-1.11 1.04-1.36 1.75-.21.51-.15 1.07-.14 1.61.24 1.64 1.82 3.02 3.5 2.87 1.12-.01 2.19-.66 2.77-1.61.19-.33.4-.67.41-1.06.1-1.79.06-3.57.07-5.36.01-4.03-.01-8.05.02-12.07z";
    this.attachShadow({ mode: "open" }).innerHTML = `
      <style>
        :host { display: flex; flex-direction: column; align-items: flex-end; color: #f2f2f2; }
        .top { display: flex; align-items: center; height: 70px; gap: 12px; padding-right: 8px; }
        .top span { font: 500 44px/70px "Noto Sans CJK SC", sans-serif; }
        svg { width: 63px; height: 70px; display: block; overflow: visible; }
        .num { display: flex; align-items: baseline; height: 40px; margin-top: 7px; line-height: 40px; color: #e6e6e6; }
        .num i { font: 400 30px/40px "Noto Sans CJK SC", sans-serif; margin-right: 4px; }
        .num b { font: 400 32px/40px "Liberation Sans", sans-serif; letter-spacing: .3px; }
      </style>
      <div class="top">
        <svg viewBox="1.500 0 22 24" preserveAspectRatio="none">
          <path d="${note}" fill="#e0245e" transform="translate(-.5 .4)"/>
          <path d="${note}" fill="#4fe6e0" transform="translate(.5 -.3)"/>
          <path d="${note}" fill="#fbfbfb"/>
        </svg>
        <span>抖音</span>
      </div>
      <div class="num"><i>抖音号:&nbsp;</i><b>614373783</b></div>`;
  }
}

class SiteMark extends HTMLElement {
  connectedCallback() {
    this.attachShadow({ mode: "open" }).innerHTML = `
      <style>
        :host { display: flex; align-items: center; gap: 8px; }
        svg { width: 72px; height: 82px; display: block; flex: none; }
        .t { display: flex; flex-direction: column; width: 178px; color: #8a8a8a; }
        .big { display: flex; align-items: center; height: 36px; font: 700 39px/36px "Noto Sans CJK SC", sans-serif; white-space: nowrap; }
        .big b { font: 700 47px/36px "Liberation Sans", sans-serif; }
        .small { height: 12px; margin-top: 7px; font: 400 12px/12px "Liberation Sans", sans-serif; letter-spacing: 2.7px; color: #6c6c6c; white-space: nowrap; transform: scaleX(1.22); transform-origin: left center; }
      </style>
      <svg viewBox="0 0 72 82">
        <defs>
          <linearGradient id="hx" x1="0" y1="0" x2="1" y2="1">
            <stop offset="0" stop-color="#62859c"/><stop offset="1" stop-color="#0a5a88"/>
          </linearGradient>
        </defs>
        <path d="M36 0L72 20.5V61.5L36 82L0 61.5V20.5Z" fill="url(#hx)"/>
        <g fill="none" stroke="#0a0a0a" stroke-width="1.1">
          <path d="M22 12C40 6 58 14 60 28M62 30C68 46 60 62 46 68M44 70C30 76 14 68 10 54M8 52C4 38 12 20 24 12"/>
        </g>
        <path d="M36 19L55 30V52L36 63L17 52V30Z" fill="#0a0a0a"/>
        <path d="M36 25L50 33V49L36 57L22 49V33Z" fill="#2b6a90"/>
        <path d="M36 25L50 33L36 41L22 33Z" fill="#3c7596"/>
        <path d="M22 33L36 41V57L22 49Z" fill="#4a86aa"/>
        <path d="M50 33L36 41V57L50 49Z" fill="#125c8a"/>
      </svg>
      <div class="t">
        <div class="big"><b>3D</b>世界网</div>
        <div class="small">WWW.3DSJW.COM</div>
      </div>`;
  }
}

class VideoFrame extends HTMLElement {
  connectedCallback() {
    this.attachShadow({ mode: "open" }).innerHTML = `
      <style>
        :host { display: flex; flex-direction: column; width: 886px; height: 1920px; background: #000; }
        .top { flex: none; height: 323px; }
        .below { display: flex; flex: none; flex-direction: column; height: 374px; box-sizing: border-box; background: #070707; padding: 41px 23px 0 0; }
        .caption { margin-left: 196px; height: 60px; font: 700 49.5px/60px "Noto Sans CJK SC", sans-serif; color: #ececec; white-space: nowrap; text-shadow: 0 0 2px #333; }
        douyin-mark { margin-top: 132px; }
        .end { display: flex; flex: 1; justify-content: flex-end; padding: 80px 26px 0 0; }
        site-mark { align-self: flex-start; }
      </style>
      <div class="top"></div>
      <nx-window></nx-window>
      <div class="below">
        <div class="caption">还是在这种陡峭的地方</div>
        <douyin-mark></douyin-mark>
      </div>
      <div class="end"><site-mark></site-mark></div>`;
  }
}

customElements.define("nx-icon", NxIcon);
customElements.define("nx-titlebar", NxTitlebar);
customElements.define("nx-menubar", NxMenubar);
customElements.define("nx-toolbar", NxToolbar);
customElements.define("nx-ribbon-item", NxRibbonItem);
customElements.define("nx-ribbon", NxRibbon);
customElements.define("nx-dropdown", NxDropdown);
customElements.define("nx-cuebar", NxCuebar);
customElements.define("nx-tree-row", NxTreeRow);
customElements.define("nx-navigator", NxNavigator);
customElements.define("nx-side-tools", NxSideTools);
customElements.define("nx-viewport", NxViewport);
customElements.define("nx-window", NxWindow);
customElements.define("douyin-mark", DouyinMark);
customElements.define("site-mark", SiteMark);
customElements.define("video-frame", VideoFrame);
</script>
</body>
</html>
